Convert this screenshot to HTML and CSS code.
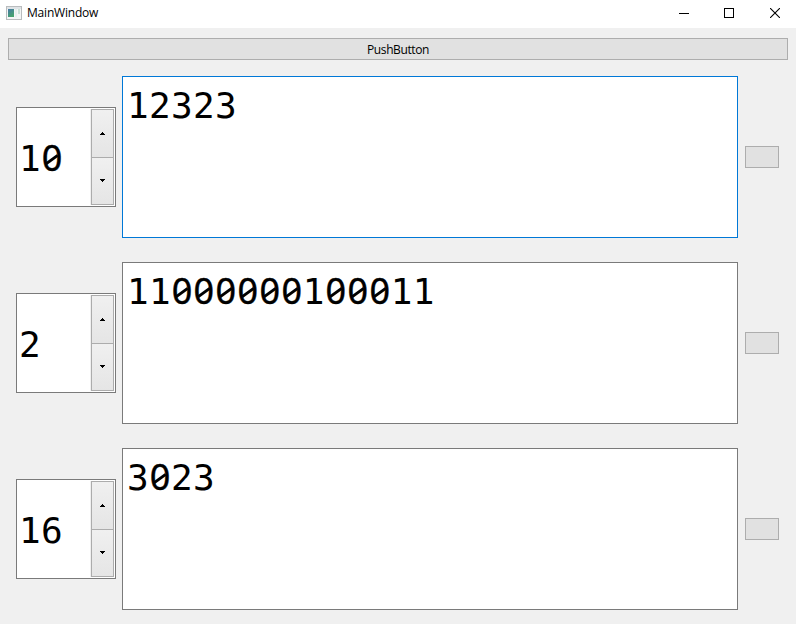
FILE: index.html
```html
<!DOCTYPE html>
<html lang="en">
<head>
<meta charset="utf-8">
<title>MainWindow</title>
<link rel="stylesheet" href="styles.css">
</head>
<body>
<header class="titlebar">
  <svg class="app-icon" width="16" height="14" viewBox="0 0 16 14" shape-rendering="crispEdges">
    <defs><linearGradient id="pane" x1="0" y1="0" x2="0.5" y2="1"><stop offset="0" stop-color="#4779a8"/><stop offset="1" stop-color="#46a36e"/></linearGradient></defs>
    <rect x="0.5" y="0.5" width="15" height="13" fill="#f4f5f6" stroke="#b9bcbe"/>
    <rect x="1" y="1" width="14" height="2" fill="#dfe3e6"/>
    <rect x="2" y="3" width="6" height="8" fill="url(#pane)"/>
    <rect x="9" y="3" width="2" height="8" fill="#e6f0ee"/>
    <rect x="12" y="3" width="2" height="5" fill="#c8e0d6"/>
  </svg>
  <span class="title">MainWindow</span>
  <div class="controls">
    <svg width="10" height="10" viewBox="0 0 10 10"><path d="M0 5.5H10" stroke="#000"/></svg>
    <svg width="10" height="10" viewBox="0 0 10 10"><rect x="0.5" y="0.5" width="9" height="9" fill="none" stroke="#000"/></svg>
    <svg class="close" width="10" height="10" viewBox="0 0 10 10"><path d="M0 0L10 10M10 0L0 10" stroke="#000" stroke-width="1.1"/></svg>
  </div>
</header>
<main class="content">
  <button class="push"><span class="push-label">PushButton</span></button>
  <section class="row">
    <div class="spin"><span class="value">1<span class="zero">0</span></span>
      <div class="steps">
        <div class="step"><svg width="5" height="3" viewBox="0 0 5 3" shape-rendering="crispEdges"><path d="M2 0H3V1H4V2H5V3H0V2H1V1H2Z"/></svg></div>
        <div class="step"><svg width="5" height="3" viewBox="0 0 5 3" shape-rendering="crispEdges"><path d="M0 0H5V1H4V2H3V3H2V2H1V1H0Z"/></svg></div>
      </div>
    </div>
    <div class="editor focused">12323</div>
    <button class="mini" aria-label="Action"></button>
  </section>
  <section class="row">
    <div class="spin"><span class="value">2</span>
      <div class="steps">
        <div class="step"><svg width="5" height="3" viewBox="0 0 5 3" shape-rendering="crispEdges"><path d="M2 0H3V1H4V2H5V3H0V2H1V1H2Z"/></svg></div>
        <div class="step"><svg width="5" height="3" viewBox="0 0 5 3" shape-rendering="crispEdges"><path d="M0 0H5V1H4V2H3V3H2V2H1V1H0Z"/></svg></div>
      </div>
    </div>
    <div class="editor">11<span class="zero">0</span><span class="zero">0</span><span class="zero">0</span><span class="zero">0</span><span class="zero">0</span><span class="zero">0</span>1<span class="zero">0</span><span class="zero">0</span><span class="zero">0</span>11</div>
    <button class="mini" aria-label="Action"></button>
  </section>
  <section class="row">
    <div class="spin"><span class="value">16</span>
      <div class="steps">
        <div class="step"><svg width="5" height="3" viewBox="0 0 5 3" shape-rendering="crispEdges"><path d="M2 0H3V1H4V2H5V3H0V2H1V1H2Z"/></svg></div>
        <div class="step"><svg width="5" height="3" viewBox="0 0 5 3" shape-rendering="crispEdges"><path d="M0 0H5V1H4V2H3V3H2V2H1V1H0Z"/></svg></div>
      </div>
    </div>
    <div class="editor">3<span class="zero">0</span>23</div>
    <button class="mini" aria-label="Action"></button>
  </section>
</main>
</body>
</html>
```
FILE: styles.css
```css
* { box-sizing: border-box; }
body {
  margin: 0;
  width: 796px;
  height: 624px;
  overflow: hidden;
  background: #f0f0f0;
  color: #000;
  font: 12px/16px "Open Sans", "Noto Sans", sans-serif;
}
svg { display: block; flex: none; }
.titlebar {
  display: flex;
  align-items: center;
  height: 28px;
  padding: 0 16px 3px 6px;
  background: #fff;
}
.title { margin-left: 5px; letter-spacing: -0.2px; }
.controls { display: flex; gap: 35px; margin-left: auto; }
.close { margin-left: 1px; }
.content { padding: 10px 8px 0; }
.push {
  display: block;
  width: 100%;
  height: 22px;
  margin-bottom: 16px;
  padding: 1px 0 0;
  border: 1px solid #adadad;
  background: #e1e1e1;
  color: #000;
  font: inherit;
}
.push-label { letter-spacing: -0.4px; }
.row {
  display: flex;
  align-items: center;
  height: 162px;
  margin-bottom: 24px;
  padding: 0 9px 0 8px;
}
.spin {
  display: flex;
  align-items: center;
  width: 100px;
  height: 100px;
  padding: 1px;
  border: 1px solid #7a7a7a;
  background: #fff;
}
.value, .editor {
  font: 36px/46px "DejaVu Sans Mono", monospace;
  letter-spacing: 0.3px;
}
.value { flex: 1; height: 46px; margin-top: 4px; padding-left: 1px; }
/* Zero with a diagonal stroke, one monospace cell wide */
.zero {
  display: inline-block;
  position: relative;
  width: 21.97px;
  height: 46px;
  margin: -2px 0;
  font-family: "Noto Sans", sans-serif;
  letter-spacing: 0;
  text-align: center;
  -webkit-text-stroke: 0.4px #000;
}
.zero::after {
  content: "";
  position: absolute;
  left: 4px;
  top: 23px;
  width: 14px;
  height: 3px;
  background: #000;
  transform: rotate(-36deg);
}
.steps {
  display: flex;
  flex-direction: column;
  width: 24px;
  height: 96px;
  border-left: 1px solid #f0f0f0;
}
.step {
  flex: 1;
  display: flex;
  align-items: center;
  justify-content: center;
  border: 1px solid #acacac;
  background: linear-gradient(#f0f0f0, #e5e5e5);
}
.step + .step { border-top: 0; }
.editor {
  width: 616px;
  height: 162px;
  margin: 0 7px 0 6px;
  padding: 6px 4px;
  border: 1px solid #7a7a7a;
  background: #fff;
}
.focused { border-color: #0078d7; }
.mini {
  width: 34px;
  height: 22px;
  padding: 0;
  border: 1px solid #adadad;
  background: #e1e1e1;
}
```
